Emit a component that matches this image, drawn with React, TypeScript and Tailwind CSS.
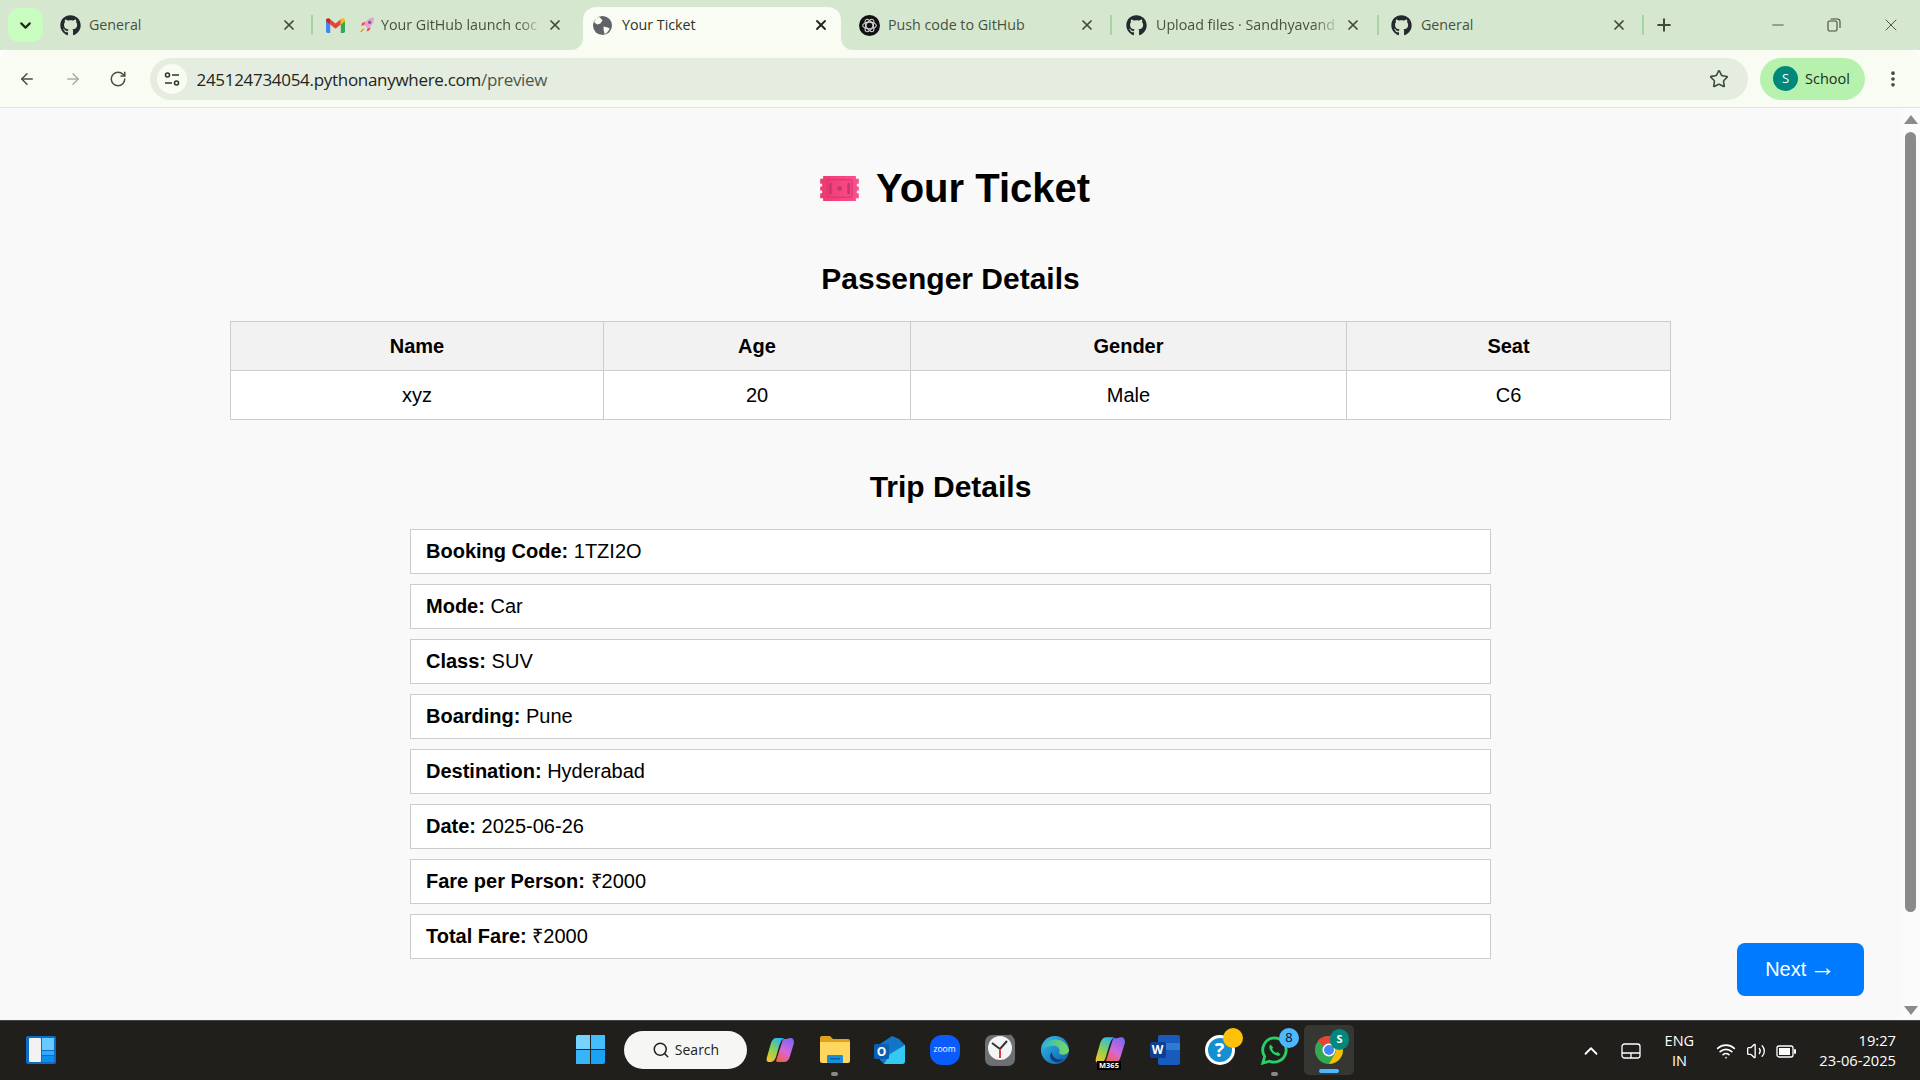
import React from "react";
import { FaGithub } from "react-icons/fa";
import { X, Plus, ChevronDown, ArrowLeft, ArrowRight, RotateCw, Star, EllipsisVertical, Minus, Search, ChevronUp, Wifi, Volume2 } from "lucide-react";

const Gmail = () => (
  <svg width="19" height="15" viewBox="0 0 18 14" className="shrink-0">
    <path d="M0 2v10.500A1.500 1.500 0 0 0 1.500 14H4V6z" fill="#4285f4" />
    <path d="M18 2v10.500a1.500 1.500 0 0 1-1.500 1.500H14V6z" fill="#34a853" />
    <path d="M14 1l-5 4-5-4v5l5 4 5-4z" fill="#ea4335" />
    <path d="M0 2c0-2 2.500-2.500 4-1v5L0 3z" fill="#c5221f" />
    <path d="M18 2c0-2-2.500-2.500-4-1v5l4-3z" fill="#fbbc04" />
  </svg>
);
const Rocket = () => (
  <svg width="16" height="18" viewBox="0 0 15 16" className="shrink-0 ml-[14px]">
    <path d="M14 1c-4 0-7 2-9 7l3 3c4-2 6-5 6-10z" fill="#e7a3c8" />
    <path d="M5 8l-3 1 1-3 3-1zM8 11l-1 3 3-1 1-3z" fill="#ef4d6b" />
    <path d="M4 11l1 1-3 3-1-1z" fill="#f59e0b" />
    <circle cx="10" cy="5.500" r="1.500" fill="#6d5bb0" />
  </svg>
);
const Globe = () => (
  <svg width="19" height="19" viewBox="0 0 18 18" className="shrink-0">
    <circle cx="9" cy="9" r="9" fill="#5f6368" />
    <path d="M6 1l3 3-2 3-3 1-3-2 2-4zM10 10l4 1 2 1-3 4-2 1-1-4z" fill="#f8fcf3" />
  </svg>
);
const OpenAI = () => (
  <svg width="21" height="21" viewBox="0 0 20 20" className="shrink-0">
    <circle cx="10" cy="10" r="10" fill="#111" />
    <g fill="none" stroke="#ddd" strokeWidth="1">
      <ellipse cx="10" cy="10" rx="6.500" ry="3.200" />
      <ellipse cx="10" cy="10" rx="6.500" ry="3.200" transform="rotate(60 10 10)" />
      <ellipse cx="10" cy="10" rx="6.500" ry="3.200" transform="rotate(120 10 10)" />
    </g>
  </svg>
);

const Sep = () => <div className="w-[2px] h-5 bg-[#a5d6a0] shrink-0" />;
const Gh = () => <FaGithub size={21} className="text-[#24292f] shrink-0" />;
const tabText = "flex-1 min-w-0 overflow-hidden whitespace-nowrap text-[14.25px] text-[#46523f] font-['Open_Sans',sans-serif]";
const fadeText = "[mask-image:linear-gradient(to_right,black_85%,transparent)]";

function TabStrip() {
  return (
    <div className="h-[50px] bg-[#d6e7d0] flex items-center relative shrink-0">
      <div className="ml-[8px] w-[35px] h-[34px] rounded-[11px] bg-[#c9fdc0] flex items-center justify-center shrink-0">
        <ChevronDown size={17} strokeWidth={3} className="text-[#1d2a1b]" />
      </div>
      <div className="flex items-center h-full ml-[1px] flex-1">
        <div className="w-[267px] h-full flex items-center shrink-0 pl-[16px] pr-[14px]">
          <Gh />
          <span className={`ml-[8px] ${tabText}`}>General</span>
          <X size={16} strokeWidth={2.6} className="text-[#3f4a3a] shrink-0" />
        </div>
        <Sep />
        <div className="w-[270px] h-full flex items-center shrink-0 pl-[13px] pr-[20px]">
          <Gmail />
          <Rocket />
          <span className={`ml-[6px] mr-[4px] ${tabText} ${fadeText}`}>Your GitHub launch coc</span>
          <X size={16} strokeWidth={2.6} className="text-[#3f4a3a] shrink-0" />
        </div>
        <div className="w-[258px] h-[43px] self-end bg-[#f8fcf3] rounded-t-[13px] flex items-center shrink-0 pl-[10px] pr-[12px] pb-[7px] relative">
          <div className="absolute -left-[12px] bottom-0 w-[12px] h-[12px] bg-[#f8fcf3]"><div className="w-full h-full bg-[#d6e7d0] rounded-br-[12px]" /></div>
          <div className="absolute -right-[12px] bottom-0 w-[12px] h-[12px] bg-[#f8fcf3]"><div className="w-full h-full bg-[#d6e7d0] rounded-bl-[12px]" /></div>
          <Globe />
          <span className="ml-[10px] flex-1 whitespace-nowrap text-[14.25px] text-[#2b3327] font-['Open_Sans',sans-serif]">Your Ticket</span>
          <X size={16} strokeWidth={2.8} className="text-[#222] shrink-0" />
        </div>
        <div className="w-[269px] h-full flex items-center shrink-0 pl-[18px] pr-[15px]">
          <OpenAI />
          <span className={`ml-[8px] ${tabText}`}>Push code to GitHub</span>
          <X size={16} strokeWidth={2.6} className="text-[#3f4a3a] shrink-0" />
        </div>
        <Sep />
        <div className="w-[265px] h-full flex items-center shrink-0 pl-[14px] pr-[16px]">
          <Gh />
          <span className={`ml-[9px] mr-[4px] ${tabText} ${fadeText}`}>Upload files · Sandhyavand</span>
          <X size={16} strokeWidth={2.6} className="text-[#3f4a3a] shrink-0" />
        </div>
        <Sep />
        <div className="w-[263px] h-full flex items-center shrink-0 pl-[12px] pr-[15px]">
          <Gh />
          <span className={`ml-[9px] ${tabText}`}>General</span>
          <X size={16} strokeWidth={2.6} className="text-[#3f4a3a] shrink-0" />
        </div>
        <Sep />
        <Plus size={20} strokeWidth={2.4} className="ml-[10px] text-[#3f4a3a]" />
      </div>
      <div className="flex items-center h-full shrink-0 text-[#3f4a3a]">
        <div className="w-[56px] flex justify-center"><Minus size={18} strokeWidth={1.2} /></div>
        <div className="w-[56px] flex justify-center">
          <svg width="14" height="14" viewBox="0 0 14 14" fill="none" stroke="currentColor" strokeWidth="1.1">
            <rect x="1" y="3" width="9" height="10" rx="1.500" />
            <path d="M3.500 1h7A2.500 2.500 0 0 1 13 3.500V10" />
          </svg>
        </div>
        <div className="w-[58px] flex justify-center"><X size={20} strokeWidth={1.1} /></div>
      </div>
    </div>
  );
}

function Toolbar() {
  return (
    <div className="h-[58px] bg-[#f8fcf3] border-b border-[#dde6d8] rounded-t-[10px] flex items-center shrink-0">
      <div className="flex items-center pl-[18px] gap-[27.5px] text-[#46523f]">
        <ArrowLeft size={18} strokeWidth={2} />
        <ArrowRight size={18} strokeWidth={2} className="text-[#a9b0a5]" />
        <RotateCw size={18} strokeWidth={2} />
      </div>
      <div className="ml-[22.5px] flex-1 h-[42px] bg-[#e5ede0] rounded-full flex items-center pl-[7px] pr-[19px]">
        <div className="w-[30px] h-[30px] rounded-full bg-[#f8fcf3] flex items-center justify-center">
          <svg width="16" height="14" viewBox="0 0 16 14" fill="none" stroke="#2b3327" strokeWidth="1.500">
            <circle cx="3.500" cy="3" r="2" />
            <path d="M8 3h7M1 11h7" />
            <circle cx="12.500" cy="11" r="2" />
          </svg>
        </div>
        <span className="ml-[10px] pt-[3px] flex-1 text-[17px] text-[#1f261c] font-['Open_Sans',sans-serif] tracking-[-0.3px]">
          245124734054.pythonanywhere.com<span className="text-[#4d5748]">/preview</span>
        </span>
        <Star size={20} strokeWidth={1.9} className="text-[#3f4a3a]" />
      </div>
      <div className="ml-[12px] w-[105px] h-[42px] rounded-full bg-[#b6f2ae] flex items-center pl-[13px] shrink-0">
        <div className="w-[25px] h-[25px] rounded-full bg-[#00897b] text-white text-[13px] flex items-center justify-center font-['Open_Sans',sans-serif]">S</div>
        <span className="ml-[7px] text-[14.5px] text-[#1f2b1c] font-['Open_Sans',sans-serif]">School</span>
      </div>
      <div className="w-[55px] flex justify-center text-[#3f4a3a] shrink-0">
        <EllipsisVertical size={20} strokeWidth={2.4} />
      </div>
    </div>
  );
}

const TicketEmoji = () => (
  <svg width="41" height="27" viewBox="0 0 40 28" className="shrink-0">
    <defs>
      <linearGradient id="tk" x1="0" y1="0" x2="1" y2="0"><stop offset="0" stopColor="#f0386f" /><stop offset="1" stopColor="#fb4f8e" /></linearGradient>
    </defs>
    <path d="M3 1h34v3h3v5h-2v3h2v4h-2v3h2v5h-3v3H3v-3H0v-5h2v-3H0v-4h2V9H0V4h3z" fill="url(#tk)" />
    <rect x="7" y="5" width="26" height="18" rx="1" fill="none" stroke="#c9366f" strokeWidth="1" />
    <rect x="9" y="8" width="3" height="12" rx="1" fill="#c9366f" />
    <rect x="28" y="8" width="3" height="12" rx="1" fill="#c9366f" />
    <circle cx="20" cy="14" r="2.500" fill="#c9366f" />
  </svg>
);

const passengerCols = [
  { w: "w-[373px]", h: "Name", v: "xyz" },
  { w: "w-[307px]", h: "Age", v: "20" },
  { w: "w-[436px]", h: "Gender", v: "Male" },
  { w: "w-[324px]", h: "Seat", v: "C6" },
];

const trip: [string, string][] = [
  ["Booking Code:", "1TZI2O"],
  ["Mode:", "Car"],
  ["Class:", "SUV"],
  ["Boarding:", "Pune"],
  ["Destination:", "Hyderabad"],
  ["Date:", "2025-06-26"],
  ["Fare per Person:", "₹2000"],
  ["Total Fare:", "₹2000"],
];

function Page() {
  return (
    <div className="flex-1 relative flex bg-[#f9f9f9] min-h-0 overflow-hidden font-['Liberation_Sans',Arial,sans-serif] text-black">
      <div className="flex-1 flex flex-col items-center">
        <h1 className="mt-[55px] ml-[8px] h-[50px] flex items-center gap-[16px] text-[40px] font-bold leading-none">
          <TicketEmoji />
          <span>Your Ticket</span>
        </h1>
        <h2 className="mt-[45px] h-[40px] flex items-center text-[30px] font-bold">Passenger Details</h2>
        <table className="mt-[23px] border-collapse text-[20px] bg-white table-fixed w-[1440px]">
          <thead>
            <tr className="h-[49px]">
              {passengerCols.map((c) => (
                <th key={c.h} className={`${c.w} border border-[#cccccc] bg-[#f2f2f2] font-bold text-center p-0`}>{c.h}</th>
              ))}
            </tr>
          </thead>
          <tbody>
            <tr className="h-[49px]">
              {passengerCols.map((c) => (
                <td key={c.h} className="border border-[#cccccc] text-center p-0">{c.v}</td>
              ))}
            </tr>
          </tbody>
        </table>
        <h2 className="mt-[46px] h-[40px] flex items-center text-[30px] font-bold">Trip Details</h2>
        <div className="mt-[23px] w-[1081px] flex flex-col gap-[10px]">
          {trip.map(([k, v]) => (
            <div key={k} className="h-[45px] bg-white border border-[#cccccc] flex items-center pl-[15px] pb-[2px] text-[20px]">
              <b className="font-bold whitespace-pre">{k} </b>
              <span>{v}</span>
            </div>
          ))}
        </div>
      </div>
      <div className="w-[19px] shrink-0 flex flex-col items-center bg-[#fbfbfb]">
        <div className="mt-[7px] w-0 h-0 border-x-[7px] border-x-transparent border-b-[9px] border-b-[#8a8a8a]" />
        <div className="mt-[8px] w-[11px] h-[780px] rounded-full bg-[#8a8a8a]" />
        <div className="mt-auto mb-[5px] w-0 h-0 border-x-[7px] border-x-transparent border-t-[9px] border-t-[#8a8a8a]" />
      </div>
      <button className="absolute left-[1737px] top-[835px] w-[127px] h-[53px] rounded-[8px] bg-[#007bff] text-white text-[20px] pb-[2px]">Next <span className="text-[26px] leading-none -ml-[2px]">→</span></button>
    </div>
  );
}

function TaskIcon({ children, w = "w-[55px]", className = "" }: { children: React.ReactNode; w?: string; className?: string }) {
  return <div className={`${w} h-[50px] flex items-center justify-center shrink-0 relative ${className}`}>{children}</div>;
}

const CopilotShape = ({ a, b }: { a: string; b: string }) => (
  <>
    <path d="M17 2h6l-5 22h-8z" fill={`url(#${b})`} />
    <path d="M18 25h-8c3-2 4-5 6-12l2-6c1-4 3-6 6-6h1c2 0 3 2 3 5l-4 13c-1 4-3 6-6 6z" fill={`url(#${b})`} />
    <path d="M10 1h8c-3 2-4 5-6 12l-2 7c-1 3-3 5-6 5H3c-2 0-3-2-2-5L5 6c1-3 3-5 5-5z" fill={`url(#${a})`} />
  </>
);

function Taskbar() {
  return (
    <div className="h-[60px] bg-[#211f1c] border-t border-[#444] shrink-0 flex items-center relative font-['Open_Sans',sans-serif] text-white">
      <div className="ml-[26px] mb-[2px] w-[30px] h-[28px] bg-[#0c6cc8] rounded-[2px] flex gap-[1px] p-[2px] shrink-0">
        <div className="w-[12px] bg-[#f2f2f2] rounded-[1px] ml-[1px]" />
        <div className="flex-1 flex flex-col gap-[1px]">
          <div className="flex-1 bg-[#66ccff]" />
          <div className="h-[4px] bg-[#33aaff]" />
          <div className="h-[6px] bg-[#0d8ff0]" />
        </div>
      </div>
      <div className="ml-[511px] mb-[2px] flex items-center">
        <TaskIcon w="w-[46px]">
          <div className="grid grid-cols-2 gap-[1px] w-[29px] h-[29px]">
            <div className="bg-[#74d3ff] rounded-tl-[2px]" /><div className="bg-[#45bcfb]" />
            <div className="bg-[#38b4f8]" /><div className="bg-[#1ba1f2] rounded-br-[2px]" />
          </div>
        </TaskIcon>
        <div className="ml-[11px] mr-[5px] w-[123px] h-[38px] rounded-full bg-[#f6f6f4] flex items-center justify-center gap-[5px] text-[#222] text-[14px] shrink-0">
          <Search size={18} strokeWidth={2} />
          <span>Search</span>
        </div>
        <TaskIcon>
          <svg width="28" height="26" viewBox="0 0 28 26">
            <defs>
              <linearGradient id="cp1" x1="0.700" y1="0" x2="0.200" y2="1"><stop offset="0" stopColor="#2bb7ef" /><stop offset="0.550" stopColor="#8fd14f" /><stop offset="1" stopColor="#f6c32c" /></linearGradient>
              <linearGradient id="cp2" x1="0.800" y1="0" x2="0.200" y2="1"><stop offset="0" stopColor="#7b68f0" /><stop offset="0.550" stopColor="#d866d8" /><stop offset="1" stopColor="#f5603e" /></linearGradient>
            </defs>
            <CopilotShape a="cp1" b="cp2" />
          </svg>
        </TaskIcon>
        <TaskIcon>
          <svg width="30" height="27" viewBox="0 0 30 27">
            <path d="M0 2a2 2 0 0 1 2-2h8l3 3h15a2 2 0 0 1 2 2v20H0z" fill="#e0a21a" />
            <path d="M0 6h30v19a2 2 0 0 1-2 2H2a2 2 0 0 1-2-2z" fill="#ffd75e" />
            <rect x="7" y="19" width="16" height="8" rx="1" fill="#1a8fd8" />
            <rect x="10" y="22" width="10" height="1.500" fill="#0a5fa4" />
          </svg>
          <div className="absolute bottom-[-1px] w-[7px] h-[4px] rounded-full bg-[#8a8a8a]" />
        </TaskIcon>
        <TaskIcon>
          <svg width="31" height="28" viewBox="0 0 31 28">
            <path d="M6 8l12-8 7 3 6 6v16a3 3 0 0 1-3 3H10l-4-4z" fill="#1276c8" />
            <path d="M10 28l6-10 15-9v16a3 3 0 0 1-3 3z" fill="#35c8f2" />
            <rect x="0" y="8" width="15" height="15" rx="1.500" fill="#0a5fb4" />
            <text x="7.500" y="20" fontSize="12" fontWeight="700" textAnchor="middle" fill="#fff" fontFamily="Open Sans, sans-serif">O</text>
          </svg>
        </TaskIcon>
        <TaskIcon>
          <div className="w-[30px] h-[30px] rounded-[12px] bg-[#0b5cff] flex items-center justify-center text-[8.5px] text-white">zoom</div>
        </TaskIcon>
        <TaskIcon>
          <svg width="30" height="32" viewBox="0 0 30 32">
            <circle cx="25" cy="3" r="2.500" fill="#5b5f62" />
            <rect x="0" y="1" width="30" height="31" rx="7" fill="#6c7073" />
            <circle cx="15" cy="14" r="12" fill="#f4f4f4" />
            <path d="M7 9l8 6 7-8" stroke="#333" strokeWidth="2" fill="none" />
            <path d="M15 15v9" stroke="#d8442e" strokeWidth="2" />
          </svg>
        </TaskIcon>
        <TaskIcon>
          <svg width="30" height="30" viewBox="0 0 30 30">
            <defs>
              <linearGradient id="ed1" x1="0" y1="0" x2="1" y2="1"><stop offset="0" stopColor="#35c1f1" /><stop offset="1" stopColor="#0c59a4" /></linearGradient>
              <linearGradient id="ed2" x1="0" y1="0" x2="1" y2="0"><stop offset="0" stopColor="#2fb7c9" /><stop offset="1" stopColor="#7ed957" /></linearGradient>
            </defs>
            <circle cx="15" cy="15" r="14" fill="url(#ed1)" />
            <path d="M2 13C4 4 24-1 29 15c0 5-8 6-10 3 2-4-2-8-7-7-5 0-9 3-10 2z" fill="url(#ed2)" />
            <path d="M12 17c0 6 6 9 12 7-6 6-14 3-14-4z" fill="#0f3f7a" />
          </svg>
        </TaskIcon>
        <TaskIcon>
          <svg width="30" height="28" viewBox="0 0 28 26">
            <CopilotShape a="cp1" b="cp2" />
          </svg>
          <span className="absolute left-[15px] bottom-[5px] bg-black text-white text-[7.5px] leading-[9px] px-[2px] font-bold">M365</span>
        </TaskIcon>
        <TaskIcon>
          <div className="w-[30px] h-[30px] relative">
            <div className="absolute right-0 top-0 w-[22px] h-[30px] bg-[#185abd] rounded-[2px]" />
            <div className="absolute right-0 top-[8px] w-[22px] h-[7px] bg-[#2b7cd3]" />
            <div className="absolute left-0 top-[7px] w-[16px] h-[16px] bg-[#103f91] rounded-[2px] text-[12px] font-bold flex items-center justify-center">W</div>
          </div>
        </TaskIcon>
        <TaskIcon>
          <div className="w-[30px] h-[30px] rounded-full border-[3px] border-white bg-[#1290d2] text-white text-[20px] font-bold flex items-center justify-center leading-none">?</div>
          <div className="absolute right-[4px] top-[3px] w-[20px] h-[20px] rounded-full bg-[#ffc107]" />
        </TaskIcon>
        <TaskIcon>
          <svg width="30" height="30" viewBox="0 0 32 32">
            <path d="M16 3a13 13 0 0 0-11 20L3 30l7-2a13 13 0 1 0 6-25z" fill="none" stroke="#25d366" strokeWidth="3" />
            <path d="M11 10c-2 2-1 6 2 9s7 4 9 2l-3-3-2 1c-2-1-3-2-4-4l1-2z" fill="#25d366" />
          </svg>
          <div className="absolute right-[3px] top-[3px] w-[20px] h-[20px] rounded-full bg-[#4db8ff] text-[#111] text-[13px] flex items-center justify-center">8</div>
          <div className="absolute bottom-[-1px] w-[7px] h-[4px] rounded-full bg-[#8a8a8a]" />
        </TaskIcon>
        <TaskIcon w="w-[50px]" className="ml-[2px] bg-[#363633] rounded-[5px]">
          <svg width="30" height="30" viewBox="0 0 30 30">
            <circle cx="15" cy="15" r="14" fill="#34a853" />
            <path d="M15 1a14 14 0 0 1 12.100 7H15a7 7 0 0 0-6 3.500L4 5.500A14 14 0 0 1 15 1z" fill="#ea4335" />
            <path d="M27.100 8A14 14 0 0 1 15 29l6-10.500A7 7 0 0 0 21 11z" fill="#fbbc04" />
            <circle cx="15" cy="15" r="6.500" fill="#fff" />
            <circle cx="15" cy="15" r="5" fill="#4285f4" />
          </svg>
          <div className="absolute right-[5px] top-[4px] w-[19px] h-[21px] rounded-full bg-[#00897b] text-white text-[11px] font-bold flex items-center justify-center">S</div>
          <div className="absolute bottom-[2px] w-[20px] h-[4px] rounded-full bg-[#4db8ff]" />
        </TaskIcon>
      </div>
      <div className="ml-auto flex items-center pr-[24px] shrink-0">
        <ChevronUp size={22} strokeWidth={2} />
        <svg width="20" height="16" viewBox="0 0 20 16" fill="none" stroke="#fff" strokeWidth="1.300" className="ml-[19px]">
          <rect x="1" y="1" width="18" height="14" rx="2.500" />
          <path d="M1 10h18M10 10v5" />
        </svg>
        <div className="ml-[23px] w-[30px] text-center text-[14.5px] leading-[20px]">ENG<br />IN</div>
        <Wifi size={20} strokeWidth={2} className="ml-[22px]" />
        <Volume2 size={20} strokeWidth={1.6} className="ml-[10px]" />
        <svg width="20" height="16" viewBox="0 0 20 16" className="ml-[10px]">
          <rect x="1" y="3" width="16" height="11" rx="2" fill="none" stroke="#fff" strokeWidth="1.300" />
          <rect x="3" y="5" width="11" height="7" fill="#fff" />
          <rect x="18" y="6" width="2" height="5" rx="1" fill="#fff" />
        </svg>
        <div className="ml-[23px] pb-[2px] text-right text-[14.7px] leading-[20px]">19:27<br />23-06-2025</div>
      </div>
    </div>
  );
}

export default function App() {
  return (
    <div className="w-[1920px] h-[1080px] flex flex-col overflow-hidden">
      <TabStrip />
      <Toolbar />
      <Page />
      <Taskbar />
    </div>
  );
}
